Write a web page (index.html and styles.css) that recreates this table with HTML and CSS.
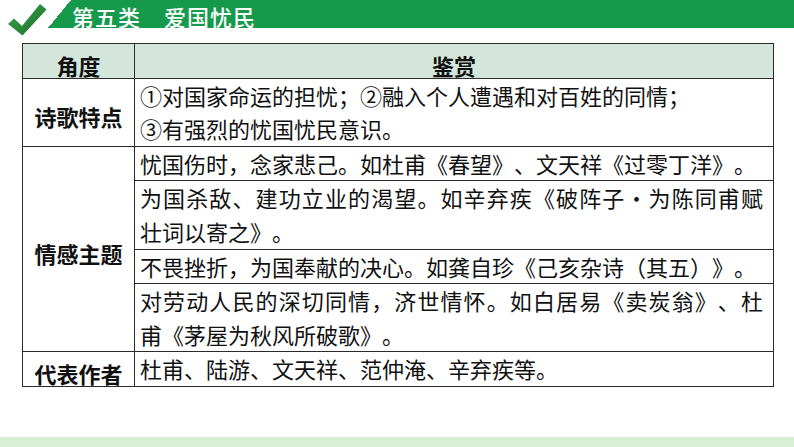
FILE: index.html
```html
<!DOCTYPE html>
<html lang="zh-CN">
<head>
<meta charset="utf-8">
<link rel="stylesheet" href="styles.css">
</head>
<body>
<div class="page">
  <header class="top">
    <svg class="check" width="48" height="40" viewBox="0 0 48 40">
      <defs>
        <linearGradient id="cg" x1="0" y1="0" x2="1" y2="1">
          <stop offset="0" stop-color="#3aa94a"/>
          <stop offset="1" stop-color="#1a6b2c"/>
        </linearGradient>
      </defs>
      <polygon points="8,24 14,18.5 22,26 40,4 46.5,9.5 22.5,35.5" fill="url(#cg)"/>
    </svg>
    <div class="slant"></div>
    <div class="banner"><span class="title">第五类　爱国忧民</span></div>
  </header>

  <table class="tbl">
    <colgroup><col class="c1"><col class="c2"></colgroup>
    <tr class="head">
      <th class="k">角度</th>
      <th class="k">鉴赏</th>
    </tr>
    <tr>
      <td class="k">诗歌特点</td>
      <td class="v">①对国家命运的担忧；②融入个人遭遇和对百姓的同情；<br>③有强烈的忧国忧民意识。</td>
    </tr>
    <tr>
      <td class="k" rowspan="4">情感主题</td>
      <td class="v">忧国伤时，念家悲己。如杜甫《春望》、文天祥《过零丁洋》。</td>
    </tr>
    <tr>
      <td class="v"><span class="jl">为国杀敌、建功立业的渴望。如辛弃疾《破阵子·为陈同甫赋</span>壮词以寄之》。</td>
    </tr>
    <tr>
      <td class="v">不畏挫折，为国奉献的决心。如龚自珍《己亥杂诗（其五）》。</td>
    </tr>
    <tr>
      <td class="v"><span class="jl">对劳动人民的深切同情，济世情怀。如白居易《卖炭翁》、杜</span>甫《茅屋为秋风所破歌》。</td>
    </tr>
    <tr>
      <td class="k">代表作者</td>
      <td class="v">杜甫、陆游、文天祥、范仲淹、辛弃疾等。</td>
    </tr>
  </table>

  <div class="foot"></div>
</div>
</body>
</html>
```

FILE: styles.css
```css
html, body {
  margin: 0;
  padding: 0;
  background: #ffffff;
}
.page {
  width: 794px;
  height: 447px;
  overflow: hidden;
  display: flex;
  flex-direction: column;
  font-family: "Noto Sans CJK SC", "Noto Sans", sans-serif;
  color: #111;
  text-spacing-trim: space-all;
}
.top {
  display: flex;
  height: 28px;
  flex: none;
}
.check {
  flex: none;
  display: block;
  overflow: visible;
}
.slant {
  flex: none;
  width: 23px;
  height: 28px;
  background: linear-gradient(to top left, #15994b 50%, rgba(21, 153, 75, 0) 50%);
}
.banner {
  flex: 1;
  height: 28px;
  background: #15994b;
  padding-left: 1px;
}
.title {
  display: block;
  color: #ffffff;
  font-size: 22px;
  font-weight: 500;
  line-height: normal;
  letter-spacing: 1px;
  white-space: pre;
}
.tbl {
  flex: none;
  margin: 15px 0 0 22px;
  width: 751px;
  border-collapse: collapse;
  table-layout: fixed;
}
.c1 { width: 112px; }
.c2 { width: 639px; }
.tbl th, .tbl td {
  border: 1.5px solid #2a2a2a;
  vertical-align: middle;
}
.head th {
  background: #d4e6dc;
}
.k {
  font-weight: 700;
  font-size: 22px;
  line-height: 23.6px;
  padding: 10px 0 0 0;
  text-align: center;
}
.v {
  font-size: 22px;
  font-weight: 400;
  line-height: 33.6px;
  padding: 0 10px 0 5px;
  text-align: left;
}
.jl {
  display: block;
  text-align: justify;
  text-align-last: justify;
}
.foot {
  margin-top: auto;
  height: 10px;
  flex: none;
  background: #d8efd3;
}
```
